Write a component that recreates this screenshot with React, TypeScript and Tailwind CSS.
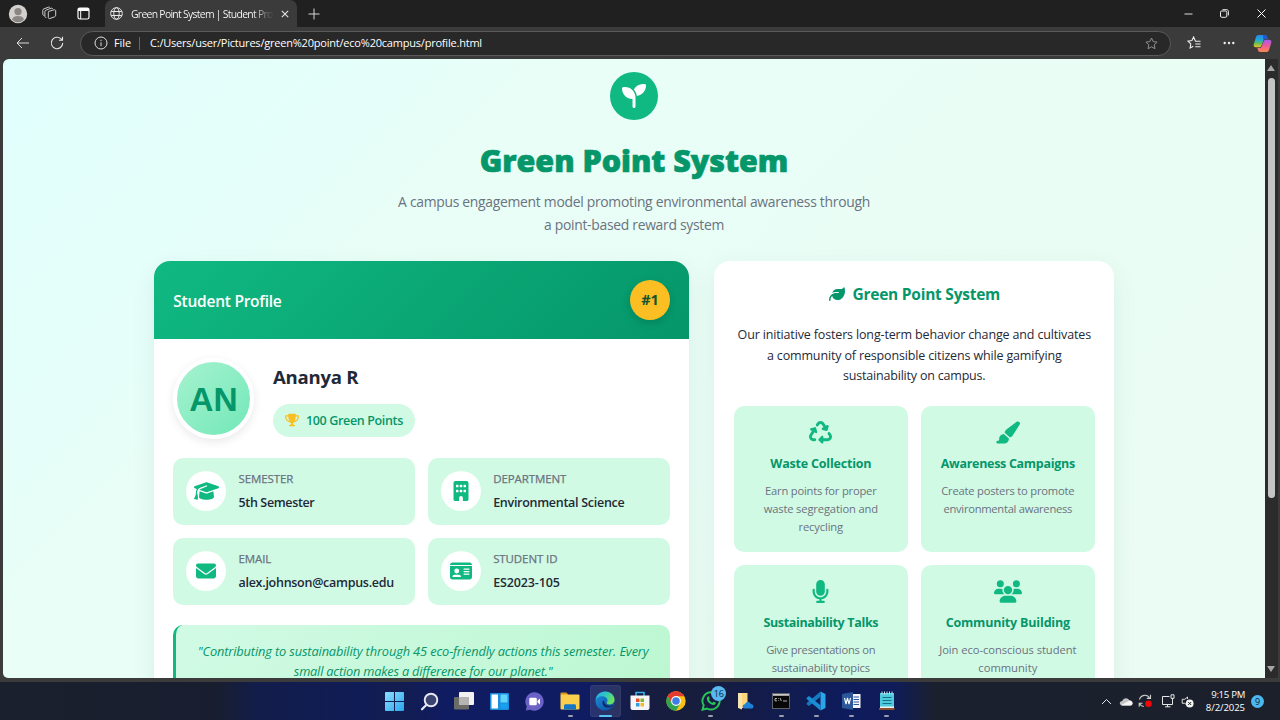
import React from "react";
import {
  FaSeedling, FaTrophy, FaGraduationCap, FaBuilding, FaEnvelope, FaIdCard,
  FaLeaf, FaRecycle, FaPaintbrush, FaMicrophone, FaUsers,
} from "react-icons/fa6";

type IconType = React.ComponentType<{ className?: string }>;

function TabStrip() {
  return (
    <div className="flex h-[27px] items-stretch bg-[#202020]">
      <div className="flex w-[105px] items-center">
        <svg className="ml-[8px]" width="20" height="20" viewBox="0 0 20 20">
          <circle cx="10" cy="10" r="9.2" fill="#d3d0ce" />
          <circle cx="10" cy="7.6" r="3.6" fill="#8a8684" />
          <path d="M4 15.6c.6-2.700 3-3.600 6-3.600s5.400.9 6 3.600a8 8 0 0 1-12 0z" fill="#8a8684" />
        </svg>
        <svg className="ml-[14px]" width="15" height="15" viewBox="0 0 15 15" fill="none" stroke="#cfcfcf" strokeWidth="1">
          <path d="M6.500 5.500 12 3.800c1-.3 1.700.2 1.700 1.200v4.200c0 .8-.4 1.300-1.200 1.600l-4.500 1.700c-1 .4-1.700-.1-1.700-1.100V6.600c0-.5.1-.9.600-1.100z" />
          <path d="M4.300 11.500c-.9.100-1.400-.4-1.400-1.200V5.700c0-.8.3-1.200 1.100-1.500l5.200-2c.8-.2 1.300 0 1.600.7M2.300 9.500C1.300 9.500.8 9 .8 8.100V4.400c0-.8.300-1.200 1.100-1.500L6.500 1.200c.7-.2 1.200-.1 1.600.4" />
        </svg>
        <svg className="ml-[20px]" width="13" height="13" viewBox="0 0 13 13" fill="none">
          <rect x="1" y="1" width="11" height="11" rx="1.800" stroke="#fff" strokeWidth="1.200" />
          <path d="M1 2.800C1 1.600 1.600 1 2.800 1h7.400c1.200 0 1.800.6 1.800 1.800V4H1z" fill="#fff" />
          <path d="M3.700 4v8" stroke="#fff" />
        </svg>
      </div>
      <div className="flex w-[192px] items-center rounded-t-[7px] bg-[#3b3b3b] pl-[5px]">
        <svg width="13" height="13" viewBox="0 0 13 13" fill="none" stroke="#e8e8e8" strokeWidth="1">
          <circle cx="6.500" cy="6.500" r="5.800" />
          <ellipse cx="6.500" cy="6.500" rx="2.700" ry="5.800" />
          <path d="M1.200 4.500h10.600M1.200 8.500h10.600" />
        </svg>
        <div className="ml-[8px] w-[143px] overflow-hidden whitespace-nowrap bg-linear-to-r from-white from-85% to-[#3b3b3b] bg-clip-text text-[10.400px] leading-[16px] tracking-[-0.700px] text-transparent">
          Green Point System | Student Profile
        </div>
        <svg className="ml-[7px]" width="8" height="8" viewBox="0 0 8 8" stroke="#e4e4e4" strokeWidth="1.100">
          <path d="M.8.8l6.400 6.400M7.200.8.8 7.200" />
        </svg>
      </div>
      <svg className="ml-[11px] mt-[8px]" width="12" height="12" viewBox="0 0 12 12" stroke="#d6d6d6">
        <path d="M6 .5v11M.5 6h11" />
      </svg>
      <div className="ml-auto flex items-center pr-[14px]">
        <svg width="9" height="9" viewBox="0 0 9 9" stroke="#ddd"><path d="M.5 5h8" /></svg>
        <svg className="ml-[27px]" width="9" height="9" viewBox="0 0 9 9" fill="none" stroke="#eee">
          <rect x=".5" y="2" width="6.300" height="6.300" rx="1.200" />
          <path d="M2.500.7h4.200c1 0 1.700.7 1.700 1.700v4" />
        </svg>
        <svg className="ml-[28px]" width="9" height="9" viewBox="0 0 9 9" stroke="#fff"><path d="M.5.5l8 8M8.500.5l-8 8" /></svg>
      </div>
    </div>
  );
}

const STAR = "M6.500 1l1.700 3.600 3.900.5-2.900 2.700.8 3.900-3.500-1.900L3 11.700l.8-3.900L.9 5.100l3.900-.5z";

function Toolbar() {
  return (
    <div className="flex h-[32px] items-center bg-[#3b3b3b]">
      <svg className="ml-[16px]" width="14" height="12" viewBox="0 0 14 12" fill="none" stroke="#dcdcdc">
        <path d="M13 6H1M6 1 1 6l5 5" />
      </svg>
      <svg className="ml-[20px]" width="14" height="14" viewBox="0 0 14 14" fill="none" stroke="#e6e6e6" strokeWidth="1.100">
        <path d="M12.700 7A5.700 5.700 0 1 1 11 2.900l1.300 1.300M12.500.8v3.500H9" />
      </svg>
      <div className="ml-[16px] flex h-[25px] w-[1091px] items-center rounded-full border border-[#5a5a5a] bg-[#282828] text-[11px] leading-[16px] text-white">
        <svg className="ml-[13px]" width="14" height="14" viewBox="0 0 14 14" fill="none" stroke="#ddd">
          <circle cx="7" cy="7" r="6" />
          <path d="M7 6.300v3.800M7 3.800v1.300" />
        </svg>
        <span className="ml-[6px] w-[17px] whitespace-nowrap tracking-[-0.100px]">File</span>
        <span className="ml-[8px] h-[13px] w-px bg-[#666]" />
        <span className="ml-[10px] whitespace-nowrap tracking-[-0.210px]">C:/Users/user/Pictures/green%20point/eco%20campus/profile.html</span>
        <svg className="ml-auto mr-[12px]" width="13" height="13" viewBox="0 0 13 13" fill="none" stroke="#8f8f8f"><path d={STAR} /></svg>
      </div>
      <svg className="ml-[16px]" width="15" height="14" viewBox="0 0 15 14" fill="none" stroke="#eee" strokeWidth="1.100">
        <path d="M8.500 5.200 6.600 1 4.900 4.600 1 5.200l2.800 2.700-.7 4 3.200-1.700M8.300 5.300h5.200M8.300 8h5.200M8.300 10.700h5.200" />
      </svg>
      <svg className="ml-[21px]" width="12" height="4" viewBox="0 0 12 4" fill="#eee">
        <circle cx="1.700" cy="2" r="1.200" /><circle cx="6" cy="2" r="1.200" /><circle cx="10.300" cy="2" r="1.200" />
      </svg>
      <svg className="ml-[18px]" width="19" height="19" viewBox="0 0 19 19">
        <defs>
          <linearGradient id="cpA" x1="0" y1="0" x2="0" y2="1">
            <stop offset="0" stopColor="#2a86ea" /><stop offset=".4" stopColor="#1ea9d8" /><stop offset=".7" stopColor="#6cc04a" /><stop offset="1" stopColor="#f5c02c" />
          </linearGradient>
          <linearGradient id="cpB" x1="0" y1="0" x2="0" y2="1">
            <stop offset="0" stopColor="#a45af0" /><stop offset=".5" stopColor="#ee5a9c" /><stop offset="1" stopColor="#fa8a4a" />
          </linearGradient>
        </defs>
        <path d="M5.500 1h6.200c1.500 0 2 .8 2.400 2l.6 2h-2.200c-1.200 0-1.800.6-2.200 1.800L8.700 11c-.5 1.600-1.200 2.300-2.700 2.300H3C1 13.300.2 12 .8 10L3 3c.4-1.300 1.100-2 2.500-2z" fill="url(#cpA)" />
        <path d="M13.500 18H7.300c-1.500 0-2-.8-2.400-2l-.6-2h2.200c1.200 0 1.800-.6 2.200-1.800L10.300 8c.5-1.600 1.200-2.300 2.700-2.300h3c2 0 2.800 1.300 2.200 3.300L16 16c-.4 1.300-1.100 2-2.500 2z" fill="url(#cpB)" />
        <path d="M10 1h1.700c1.500 0 2 .8 2.400 2l.6 2h-2.200c-1.200 0-1.800.6-2.200 1.800z" fill="#2257d0" />
      </svg>
    </div>
  );
}

function InfoCard({ icon: Icon, label, value, iconClass, valueClass }: { icon: IconType; label: string; value: string; iconClass: string; valueClass: string }) {
  return (
    <div className="flex h-[67px] items-center rounded-[10px] bg-[#d1fae5] pl-[13px]">
      <div className="-mt-px flex size-[40px] shrink-0 items-center justify-center rounded-full bg-white text-[#10b981]">
        <Icon className={iconClass} />
      </div>
      <div className="-mt-[2px] ml-[12px] whitespace-nowrap">
        <div className="text-[11.500px] leading-[20px] tracking-[-0.100px] text-[#6b7280] [-webkit-text-stroke:0.25px_#6b7280]">{label}</div>
        <div className={"mt-[4px] text-[12.500px] font-semibold leading-[20px] text-[#1f2937] " + valueClass}>{value}</div>
      </div>
    </div>
  );
}

function Feature({ icon: Icon, iconClass, title, titleClass, lines }: { icon: IconType; iconClass: string; title: string; titleClass: string; lines: [string, string][] }) {
  return (
    <div className="flex h-[146px] flex-col items-center rounded-[10px] bg-[#d1fae5] pt-[15px] whitespace-nowrap">
      <Icon className={"h-[23px] shrink-0 text-[#10b981] " + iconClass} />
      <div className={"mt-[10px] text-[12.500px] font-bold leading-[20px] text-[#059669] " + titleClass}>{title}</div>
      <div className="mt-[8px] text-center text-[11.200px] leading-[18.400px] text-[#6b7280]">
        {lines.map(([text, cls]) => <div key={text} className={cls}>{text}</div>)}
      </div>
    </div>
  );
}

function ProfileCard() {
  return (
    <section className="h-[500px] w-[534.700px] shrink-0 overflow-hidden rounded-[16px] bg-white shadow-[0_8px_24px_rgba(5,80,60,0.08)]">
      <div className="flex h-[78px] items-center justify-between bg-linear-135 from-[#10b981] to-[#059669] pl-[19px] pr-[19px]">
        <h2 className="mt-[3px] whitespace-nowrap text-[15.500px] font-semibold tracking-[-0.250px] text-white">Student Profile</h2>
        <div className="flex size-[40px] items-center justify-center rounded-full bg-[#fbbf24] text-[14.500px] font-bold text-[#14532d] shadow-[0_3px_8px_rgba(0,0,0,0.15)]">#1</div>
      </div>
      <div className="px-[19.200px] pt-[19px]">
        <div className="flex">
          <div className="flex size-[81px] items-center justify-center rounded-full border-[4px] border-white bg-linear-135 from-[#a7f3d0] to-[#6ee7b7] bg-origin-border font-['Liberation_Sans'] text-[33.500px] font-bold text-[#059669] shadow-[0_3px_10px_rgba(0,0,0,0.09)]">
            <span className="mr-px mt-[3px]">AN</span>
          </div>
          <div className="ml-[18.500px] pt-[5px]">
            <div className="whitespace-nowrap text-[18.600px] font-bold leading-[28px] tracking-[-0.250px] text-[#1f2937]">Ananya R</div>
            <div className="mt-[13px] flex h-[33px] w-[142px] items-center rounded-full bg-[#d1fae5] pl-[12px] text-[12.500px] font-semibold text-[#059669]">
              <FaTrophy className="size-[14px] -mt-[1px] overflow-visible text-[#fbbf24]" />
              <span className="ml-[7px] mt-[2px] whitespace-nowrap tracking-[-0.350px]">100 Green Points</span>
            </div>
          </div>
        </div>
        <div className="mt-[19px] grid grid-cols-2 gap-[13px]">
          <InfoCard icon={FaGraduationCap} label="SEMESTER" value="5th Semester" iconClass="h-[20px] w-[25px]" valueClass="tracking-[-0.350px]" />
          <InfoCard icon={FaBuilding} label="DEPARTMENT" value="Environmental Science" iconClass="size-[20px]" valueClass="tracking-[-0.280px]" />
          <InfoCard icon={FaEnvelope} label="EMAIL" value="alex.johnson@campus.edu" iconClass="size-[20px]" valueClass="tracking-[-0.270px]" />
          <InfoCard icon={FaIdCard} label="STUDENT ID" value="ES2023-105" iconClass="h-[20px] w-[22px]" valueClass="tracking-[-0.120px]" />
        </div>
        <div className="mt-[20px] h-[90px] whitespace-nowrap rounded-[10px] border-l-[3px] border-[#10b981] bg-linear-135 from-[#d1fae5] to-[#bbf7d0] pt-[16px] text-center text-[12.800px] italic leading-[20.300px] text-[#059669]">
          <div className="tracking-[-0.130px]">"Contributing to sustainability through 45 eco-friendly actions this semester. Every</div>
          <div className="tracking-[-0.200px]">small action makes a difference for our planet."</div>
        </div>
      </div>
    </section>
  );
}

function AboutCard() {
  return (
    <section className="h-[560px] w-[400px] shrink-0 rounded-[16px] bg-white px-[19.500px] pt-[20px] shadow-[0_8px_24px_rgba(5,80,60,0.08)]">
      <div className="flex h-[26px] items-center justify-center text-[#059669]">
        <FaLeaf className="size-[16px] overflow-visible" />
        <h2 className="ml-[8px] mt-[2px] whitespace-nowrap text-[15.500px] font-bold tracking-[-0.250px]">Green Point System</h2>
      </div>
      <div className="mt-[18px] whitespace-nowrap text-center text-[12.500px] leading-[20.500px] tracking-[-0.150px] text-[#1f2937]">
        <div>Our initiative fosters long-term behavior change and cultivates</div>
        <div>a community of responsible citizens while gamifying</div>
        <div className="tracking-[-0.200px]">sustainability on campus.</div>
      </div>
      <div className="mt-[19px] grid grid-cols-2 gap-[13px]">
        <Feature icon={FaRecycle} iconClass="w-[23px]" title="Waste Collection" titleClass="tracking-[-0.200px]" lines={[["Earn points for proper", "tracking-[-0.210px]"], ["waste segregation and", "tracking-[-0.150px]"], ["recycling", "tracking-[-0.150px]"]]} />
        <Feature icon={FaPaintbrush} iconClass="w-[25px]" title="Awareness Campaigns" titleClass="tracking-[-0.300px]" lines={[["Create posters to promote", "tracking-[-0.210px]"], ["environmental awareness", "tracking-[-0.270px]"]]} />
        <Feature icon={FaMicrophone} iconClass="w-[23px]" title="Sustainability Talks" titleClass="tracking-[-0.340px]" lines={[["Give presentations on", "tracking-[-0.240px]"], ["sustainability topics", "tracking-[-0.210px]"]]} />
        <Feature icon={FaUsers} iconClass="w-[28px]" title="Community Building" titleClass="tracking-[-0.180px]" lines={[["Join eco-conscious student", "tracking-[-0.060px]"], ["community", "tracking-[0px]"]]} />
      </div>
    </section>
  );
}

function TaskIcons() {
  const cell = "relative flex h-[34px] w-[35.200px] items-center justify-center";
  const dot = "absolute bottom-[1px] h-[2px] w-[5px] rounded-full bg-[#9a9cb0]";
  return (
    <div className="flex items-center">
      <div className={cell}>
        <svg width="19" height="19" viewBox="0 0 19 19">
          <defs><linearGradient id="win" x1="0" y1="0" x2="1" y2="1"><stop stopColor="#8be0fd" /><stop offset="1" stopColor="#2aa6ee" /></linearGradient></defs>
          <path d="M0 1a1 1 0 0 1 1-1h8v9H0zM10 0h8a1 1 0 0 1 1 1v8h-9zM0 10h9v9H1a1 1 0 0 1-1-1zM10 10h9v8a1 1 0 0 1-1 1h-8z" fill="url(#win)" />
        </svg>
      </div>
      <div className={cell}>
        <svg width="19" height="19" viewBox="0 0 19 19"><circle cx="11" cy="8" r="6.300" fill="#3b4470" stroke="#e6e8f0" strokeWidth="1.900" /><path d="M6.500 12.700 2 17.300" stroke="#e6e8f0" strokeWidth="2.200" strokeLinecap="round" /></svg>
      </div>
      <div className={cell}>
        <svg width="20" height="18" viewBox="0 0 20 18"><rect y="5" width="15" height="12.500" rx="1" fill="#6b6b68" /><rect x="5" y="0" width="15" height="13" rx="1" fill="#f1f1f1" /><path d="M5 5h10v8H5z" fill="#b5b5b3" /></svg>
      </div>
      <div className={cell}>
        <svg width="19" height="17" viewBox="0 0 19 17"><rect width="19" height="17" rx="1" fill="#1c8fdc" /><rect x="1.500" y="1.500" width="6.500" height="14" rx=".5" fill="#fff" /><rect x="10.500" y="1.500" width="7" height="8" rx=".5" fill="#62d3fb" /><rect x="10.500" y="10.500" width="7" height="5" rx=".5" fill="#16a0ee" /></svg>
      </div>
      <div className={cell}>
        <svg width="19" height="19" viewBox="0 0 19 19"><path d="M9.500.3a9.200 9.200 0 1 1-4.200 17.400L.8 18.500l.9-4.200A9.200 9.200 0 0 1 9.500.3z" fill="#6a62c4" /><rect x="4.300" y="5.700" width="7.500" height="7.500" rx="1.300" fill="#fff" /><path d="M12.500 8.700 15 6.500v6l-2.500-2z" fill="#fff" /></svg>
      </div>
      <div className={cell}>
        <svg width="20" height="18" viewBox="0 0 20 18"><path d="M.5 1.500c0-.6.400-1 1-1h5l2 2.500H.5z" fill="#d99716" /><rect x=".5" y="2.500" width="19" height="15" rx="1" fill="#fbcf4e" /><path d="M4 17.500v-3.700c0-1 .6-1.600 1.600-1.600h8.800c1 0 1.600.6 1.600 1.600v3.700z" fill="#1478c8" /></svg>
        <span className={dot} />
      </div>
      <div className="relative flex h-[34px] w-[35.200px] items-center justify-center">
        <div className="flex h-[32px] w-[31px] items-center justify-center rounded-[3px] border border-white/5 bg-white/10">
          <svg width="20" height="20" viewBox="0 0 20 20">
            <defs>
              <linearGradient id="eA" x1="0" y1="0" x2="1" y2=".5"><stop stopColor="#28a8e8" /><stop offset=".5" stopColor="#2dc6c4" /><stop offset="1" stopColor="#6be05a" /></linearGradient>
              <linearGradient id="eB" x1="0" y1="0" x2="1" y2="1"><stop stopColor="#1b8ede" /><stop offset="1" stopColor="#0b4fa0" /></linearGradient>
            </defs>
            <circle cx="10" cy="10" r="9.600" fill="url(#eB)" />
            <path d="M.5 9.500C1 4 5 .4 10 .4c5.800 0 9.600 4 9.600 8.200 0 3-2.200 4.900-4.800 4.900-2.200 0-3.200-.9-3.200-1.700 0-.6.900-.9.900-2.400C12.500 7 10 5.200 7 5.200 3.800 5.200 1.400 7 .5 9.500z" fill="url(#eA)" />
            <path d="M8 9.500c-1.500 3.500.8 7 4.500 7 2.600 0 4.700-1 6-2-.3-.7-2 .4-4.300.2-3.400-.3-5.200-2.200-5-4.700z" fill="#14275e" />
          </svg>
        </div>
        <span className="absolute bottom-[1px] h-[2px] w-[13px] rounded-full bg-[#58c4f6]" />
      </div>
      <div className={cell}>
        <svg width="20" height="20" viewBox="0 0 20 20"><path d="M6 5V1.500h8V5" fill="none" stroke="#35b5ee" strokeWidth="1.500" /><path d="M.5 4.500h19V17a2 2 0 0 1-2 2h-15a2 2 0 0 1-2-2z" fill="#f4f6f8" /><path d="M6 7.500h3.500V11H6z" fill="#e8502c" /><path d="M10.500 7.500H14V11h-3.500z" fill="#7cb82f" /><path d="M6 12h3.500v3.500H6z" fill="#2a9fe6" /><path d="M10.500 12H14v3.500h-3.500z" fill="#f9b922" /></svg>
      </div>
      <div className={cell}>
        <svg width="20" height="20" viewBox="0 0 20 20"><circle cx="10" cy="10" r="9.700" fill="#fbc116" /><path d="M1.600 5.100A9.700 9.700 0 0 1 18.400 5.200H10L5.800 12.400z" fill="#e33b2e" /><path d="M1.600 5.100A9.700 9.700 0 0 0 10 19.700l4.200-7.300H5.800z" fill="#2ea44f" /><circle cx="10" cy="10" r="4.900" fill="#fff" /><circle cx="10" cy="10" r="3.800" fill="#3c7de6" /></svg>
      </div>
      <div className={cell}>
        <svg width="20" height="20" viewBox="0 0 20 20"><path d="M10 1.300a8.600 8.600 0 1 1-4 16.200l-4.500 1.200 1.200-4.400A8.600 8.600 0 0 1 10 1.300z" fill="none" stroke="#27c45a" strokeWidth="1.900" /><path d="M6.800 5.500c.6-.5 1-.4 1.300.2l.7 1.600c0 .5-.8 1-.7 1.400.7 1.500 1.700 2.400 3.200 3 .5 0 .9-1 1.400-1l1.800.9c.5.3.2 1.300-.3 1.700-1.400 1.100-3.500.6-5.600-1C6 10.300 5 7.300 6.800 5.500z" fill="#27c45a" /></svg>
        <span className="absolute left-[18px] top-[2px] flex size-[15px] items-center justify-center rounded-full bg-[#57b9f0] text-[9px] leading-none tracking-[-0.300px] text-[#0c1e3c]">16</span>
        <span className={dot} />
      </div>
      <div className={cell}>
        <svg width="17" height="18" viewBox="0 0 17 18"><path d="M1 1h9.500v15H1z" fill="#fcd67c" /><path d="M1 1h4v16.500L1 16z" fill="#f5e3b0" /><path d="M8 16.500c-3.200 0-3.200-4 0-4.200.8-3 5.200-3 5.800-.3 3.400 0 3.500 4.500.4 4.500z" fill="#1e83d8" /></svg>
      </div>
      <div className={cell}>
        <svg width="18" height="16" viewBox="0 0 18 16"><rect x=".5" y=".5" width="17" height="15" fill="#080808" stroke="#777" strokeWidth=".8" /><path d="M1 1h16v1.800H1z" fill="#c9c9c9" /><path d="M3 5.500h2M3 5.500v2.300h2M6.500 5.200v.6M6.500 7v.6M8 5l1.300 3M11 8h4" stroke="#ddd" strokeWidth=".8" fill="none" /></svg>
        <span className={dot} />
      </div>
      <div className={cell}>
        <svg width="20" height="20" viewBox="0 0 20 20"><path d="M14.500.5 19.500 3v14l-5 2.500z" fill="#2aa4ea" /><path d="M14.500.5v5.300L3 15 .7 13.200v-1.100z" fill="#1479bf" /><path d="M14.500 19.500v-5.300L3 5 .7 6.800v1.100z" fill="#1b8cd6" /></svg>
        <span className={dot} />
      </div>
      <div className={cell}>
        <svg width="19" height="18" viewBox="0 0 19 18"><path d="M9 2h9.500v14H9z" fill="#f4f6fb" /><path d="M11.500 5H17M11.500 7.500H17M11.500 10H17M11.500 12.500H17" stroke="#2b579a" strokeWidth="1.100" /><path d="M0 2 11 0v18L0 16z" fill="#2b579a" /><path d="M2.500 6l1.500 6 1.500-6L7 12l1.500-6" stroke="#fff" strokeWidth="1.100" fill="none" /></svg>
        <span className={dot} />
      </div>
      <div className={cell}>
        <svg width="16" height="20" viewBox="0 0 16 20"><path d="M1 2h14v16H1z" fill="#4fc9dc" /><path d="M0 17h15.500v2H0z" fill="#8c4d2c" /><path d="M1 15.500h14V17H1z" fill="#e9f3f3" /><path d="M3.500 6.500h9M3.500 9.500h9M3.500 12.500h9" stroke="#12728a" strokeWidth="1.200" /><path d="M3 .5v3M5.500.5v3M8 .5v3M10.500.5v3M13 .5v3" stroke="#d6f3f6" strokeWidth=".9" /></svg>
        <span className={dot} />
      </div>
    </div>
  );
}

function Taskbar() {
  return (
    <div className="flex h-[38px] items-center bg-[linear-gradient(90deg,#1a202c_0%,#181e30_17%,#121d4a_20%,#101c56_28%,#131d50_31%,#0f1c62_35%,#0f1c62_46%,#161d42_50%,#171d3c_54%,#121c4c_60%,#0e1b5c_66%,#101c58_70%,#1a202e_73%,#1b202b_100%)]">
      <div className="w-[376.500px] shrink-0" />
      <TaskIcons />
      <div className="ml-auto flex items-center text-white">
        <svg width="11" height="7" viewBox="0 0 11 7" fill="none" stroke="#e6e6e6"><path d="M1 6l4.500-4.500L10 6" /></svg>
        <svg className="ml-[7px]" width="14" height="9" viewBox="0 0 14 9"><path d="M3.500 8.500C-.3 8.500.2 4 3.300 4 4.300.4 9 .2 10.300 3.300c4-.2 4.300 5.200 1 5.200z" fill="#c4c4c4" /><path d="M2 8.200 9.500 4c4-1.500 5.700 4.500 1.800 4.500H3.500z" fill="#f4f4f4" /></svg>
        <svg className="ml-[5px]" width="15" height="14" viewBox="0 0 15 14" fill="none" stroke="#ccc" strokeWidth="1.100"><path d="M1.500 5.500a5.500 5.500 0 0 1 10.200-1.300M12.500.8v3.600H8.800M1.200 12.700V9.200h3.400M1.400 9.500a5.500 5.500 0 0 0 4.500 3" /><circle cx="10.500" cy="9.700" r="3.300" fill="#f00808" stroke="none" /></svg>
        <svg className="ml-[8px]" width="14" height="14" viewBox="0 0 14 14" fill="none" stroke="#e6e6e6"><path d="M8.500 2.500h-7v8h10V6.500M4 12.800h5.500M6.500 10.500v2.300M10 .8h3v3.500h-3zM11.500 4.300v2.500" /></svg>
        <svg className="ml-[6px]" width="13" height="13" viewBox="0 0 13 13" fill="none" stroke="#ddd"><path d="M6.500 2 3.800 4.300H1.200v4h2.600l1.500 1.300M6.500 2v2" /><circle cx="8.700" cy="8.500" r="3.900" fill="#f4f4f4" stroke="none" /><path d="M7.200 7l3 3M10.200 7l-3 3" stroke="#222" /></svg>
        <div className="ml-[6px] w-[45px] whitespace-nowrap text-right text-[9.600px] leading-[13px] tracking-[-0.300px]">
          <div>9:15 PM</div>
          <div className="tracking-[-0.100px]">8/2/2025</div>
        </div>
        <div className="ml-[6px] mr-[16px] flex size-[13px] items-center justify-center rounded-full bg-[#4cb8f0] text-[9px] leading-none text-[#10202e]">9</div>
      </div>
    </div>
  );
}

export default function App() {
  return (
    <div className="flex h-[720px] w-[1280px] flex-col overflow-hidden bg-[#3b3b3b] font-['Open_Sans',sans-serif]">
      <TabStrip />
      <Toolbar />
      <div className="flex h-[619px] pl-[3px]">
        <main className="flex w-[1262px] flex-col items-center overflow-hidden rounded-tl-[6px] rounded-bl-[5px] bg-linear-135 from-[#e0fffd] via-[#e8fef7] via-30% to-[#ebfcf3]">
          <div className="ml-[0.600px] mt-[13px] flex size-[48px] shrink-0 items-center justify-center rounded-full bg-[#10b981] text-white">
            <FaSeedling className="size-[24px]" />
          </div>
          <h1 className="mt-[20px] h-[40px] shrink-0 whitespace-nowrap text-[30.500px] font-extrabold leading-[40px] tracking-[-0.050px] text-[#059669] [-webkit-text-stroke:0.7px_#059669]">Green Point System</h1>
          <div className="mt-[11px] shrink-0 whitespace-nowrap text-center text-[13.900px] leading-[22.500px] tracking-[-0.290px] text-[#6b7280]">
            <div>A campus engagement model promoting environmental awareness through</div>
            <div>a point-based reward system</div>
          </div>
          <div className="ml-[0.600px] mt-[25px] flex gap-[25.300px]">
            <ProfileCard />
            <AboutCard />
          </div>
        </main>
        <div className="flex w-[13px] flex-col items-center bg-[#2b2b2b]">
          <svg className="mr-[1px] mt-[6px] shrink-0" width="8" height="6" viewBox="0 0 8 6"><path d="M4 0l4 6H0z" fill="#a5a5a5" /></svg>
          <div className="mr-[1px] mt-[7px] h-[420px] w-[7px] rounded-full bg-[#c4c4c4]" />
          <svg className="mb-[6px] mr-[1px] mt-auto shrink-0" width="8" height="6" viewBox="0 0 8 6"><path d="M4 6l4-6H0z" fill="#a5a5a5" /></svg>
        </div>
      </div>
      <div className="h-[4px] shrink-0 bg-[#3b3b3b]" />
      <Taskbar />
    </div>
  );
}
